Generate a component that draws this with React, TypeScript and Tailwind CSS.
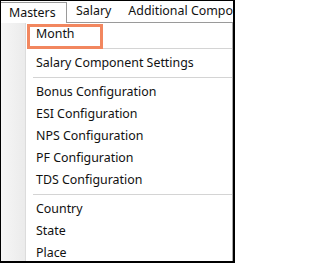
import React from "react";

type Entry = { kind: "item"; label: string; boxed?: boolean } | { kind: "sep" };

const entries: Entry[] = [
  { kind: "item", label: "Month", boxed: true },
  { kind: "sep" },
  { kind: "item", label: "Salary Component Settings" },
  { kind: "sep" },
  { kind: "item", label: "Bonus Configuration" },
  { kind: "item", label: "ESI Configuration" },
  { kind: "item", label: "NPS Configuration" },
  { kind: "item", label: "PF Configuration" },
  { kind: "item", label: "TDS Configuration" },
  { kind: "sep" },
  { kind: "item", label: "Country" },
  { kind: "item", label: "State" },
  { kind: "item", label: "Place" },
];

export default function App() {
  return (
    <div
      className="w-[235px] h-[263px] overflow-hidden bg-white border-black border-l border-t border-r-2 border-b-2 flex flex-col text-[12.4px] text-[#111]"
      style={{ fontFamily: '"Noto Sans", "Open Sans", sans-serif' }}
    >
      {/* menu bar */}
      <div className="h-[22px] flex shrink-0">
        <div className="w-[66px] mt-px border-t border-r border-[#9a9a9a] bg-white flex items-center pl-[8px] leading-none">
          Masters
        </div>
        <div className="flex-1 border-b border-[#9a9a9a] flex items-center whitespace-nowrap overflow-hidden leading-none">
          <span className="ml-[9px]">Salary</span>
          <span className="ml-[17px]">Additional Component</span>
        </div>
      </div>
      {/* dropdown area */}
      <div className="flex flex-1 min-h-0">
        <div className="w-[24px] bg-gradient-to-r from-[#f6f6f6] to-[#ebebeb]" />
        <div className="flex-1 bg-white border-l border-r border-l-[#dcdcdc] border-r-[#a8a8a8] flex flex-col">
          {entries.map((e, i) =>
            e.kind === "sep" ? (
              <div key={i} className="h-[7px] shrink-0 flex items-center pl-[7px]">
                <div className="h-px w-full bg-[#d4d4d4]" />
              </div>
            ) : (
              <div key={i} className="relative h-[22px] shrink-0 flex items-center pl-[10px] whitespace-nowrap leading-none">
                {e.label}
                {e.boxed && (
                  <div className="absolute left-px top-px w-[76px] h-[25px] border-[3px] border-[#f2875f]" />
                )}
              </div>
            )
          )}
        </div>
      </div>
    </div>
  );
}
